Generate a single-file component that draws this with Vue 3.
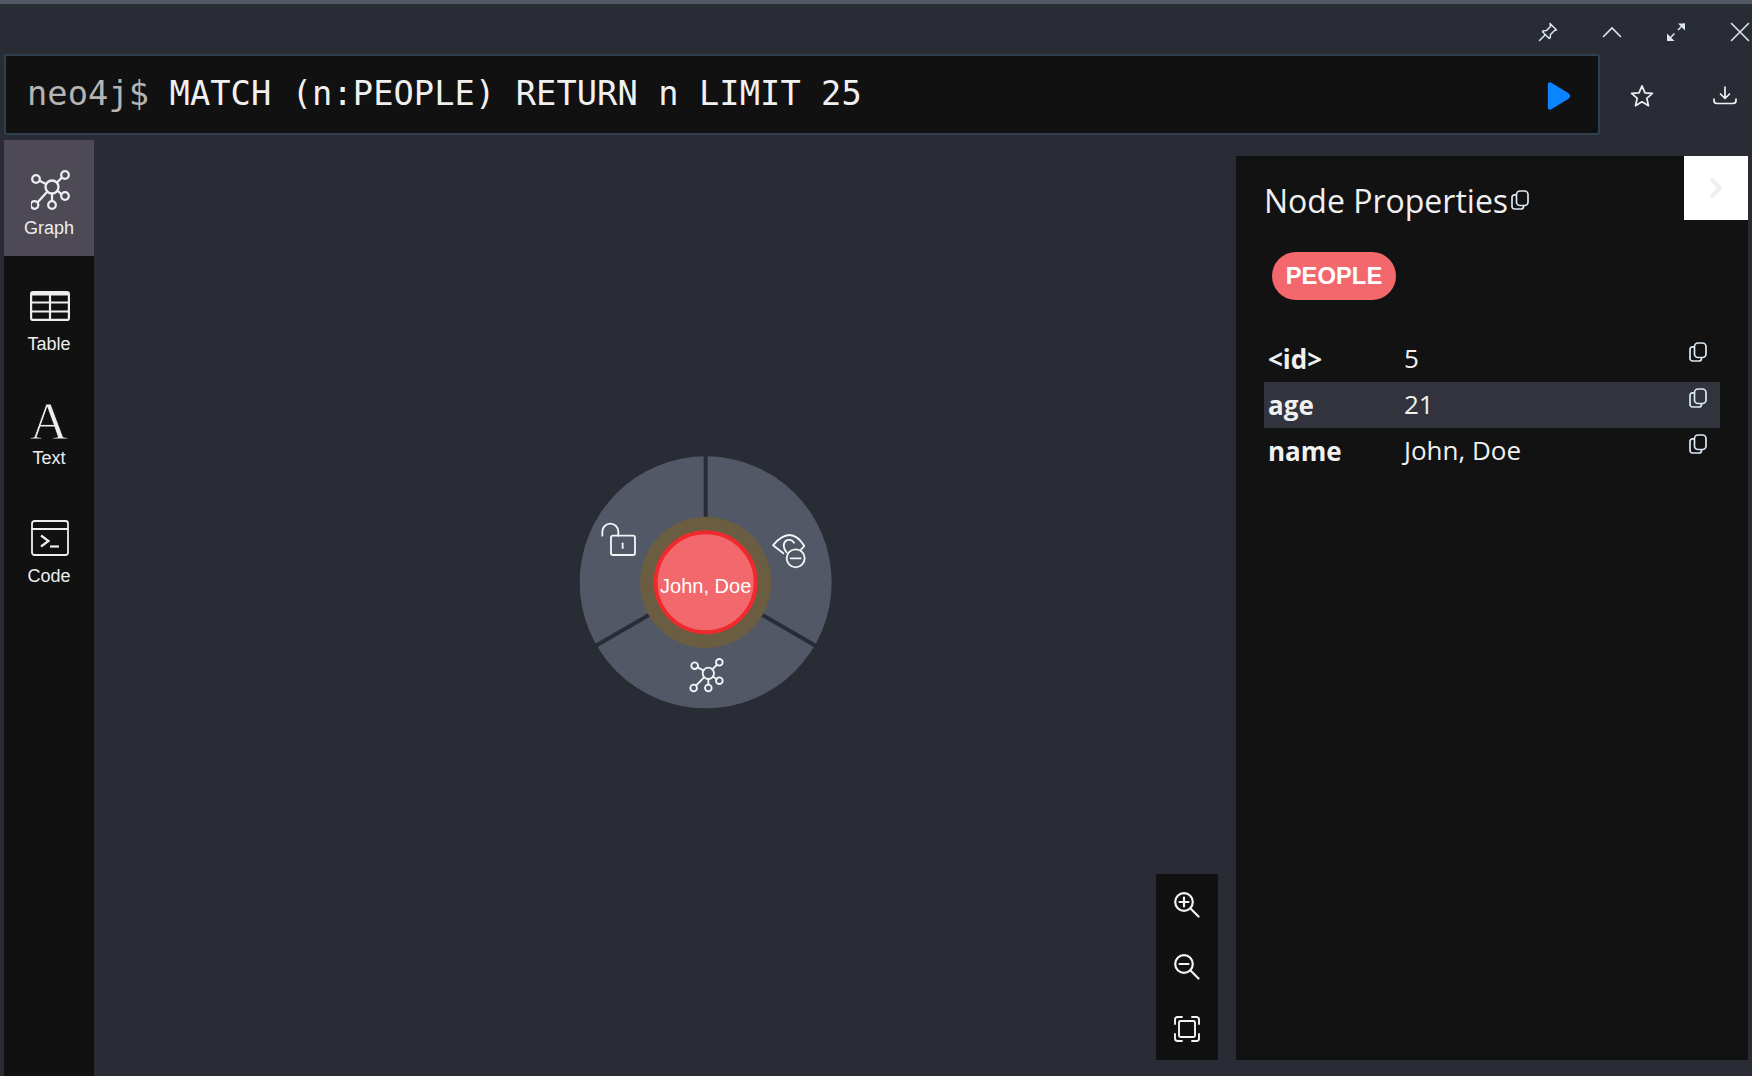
<script setup>
const rows = [
  { key: '<id>', value: '5' },
  { key: 'age', value: '21', alt: true },
  { key: 'name', value: 'John, Doe' }
]
</script>

<template>
  <div class="app">
    <div class="topline"></div>
    <header class="head">
      <button class="hbtn">
        <svg width="20" height="20" viewBox="0 0 20 20" fill="none" stroke="#dce6f0" stroke-width="1.5" stroke-linejoin="round" stroke-linecap="round"><path d="M1.5 18.5 7 13M12 1.5l6.5 6.5-2 .5-4 4 -.3 3.2-1 .8-6.700-6.700.8-1 3.200-.3 4-4z"/></svg>
      </button>
      <button class="hbtn">
        <svg width="20" height="12" viewBox="0 0 20 12" fill="none" stroke="#dce6f0" stroke-width="1.6" stroke-linecap="round"><path d="M1.500 10.500 10 2l8.500 8.500"/></svg>
      </button>
      <button class="hbtn">
        <svg width="20" height="20" viewBox="0 0 20 20" fill="none" stroke="#dce6f0" stroke-width="1.5"><path d="M12 8l6.500-6.500M2 18l6.500-6.500"/><path d="M12 1.500h7v7z" fill="#dce6f0" stroke="none"/><path d="M1 11.500v7.500h7.500z" fill="#dce6f0" stroke="none"/></svg>
      </button>
      <button class="hbtn">
        <svg width="20" height="20" viewBox="0 0 20 20" fill="none" stroke="#dce6f0" stroke-width="1.6" stroke-linecap="round"><path d="M1.500 1.500l17 17M18.500 1.500l-17 17"/></svg>
      </button>
    </header>

    <section class="query">
      <div class="editor">
        <div class="code"><span class="prompt">neo4j$ </span>MATCH (n:PEOPLE) RETURN n LIMIT 25</div>
        <svg class="play" width="24" height="30" viewBox="0 0 24 30"><path d="M4 1.500 L22 12.500 Q24 15 22 17.500 L4 28.500 Q1 29.500 .8 26.500 V3.500 Q1 .5 4 1.500z" fill="#0a84ff"/></svg>
      </div>
      <button class="qbtn star">
        <svg width="24" height="24" viewBox="0 0 24 24" fill="none" stroke="#eef1f5" stroke-width="1.7" stroke-linejoin="round"><path d="M12 1.800l3 7 7.400.6-5.600 4.900 1.700 7.400-6.500-3.900-6.500 3.900 1.700-7.400L1.600 9.400 9 8.800z"/></svg>
      </button>
      <button class="qbtn dl">
        <svg width="24" height="20" viewBox="0 0 24 20" fill="none" stroke="#eef1f5" stroke-width="1.700" stroke-linecap="round" stroke-linejoin="round"><path d="M12 1v11M7.500 8l4.500 4.500L16.500 8M1 13v1.500a3 3 0 0 0 3 3h16a3 3 0 0 0 3-3V13"/></svg>
      </button>
    </section>

    <main class="main">
      <nav class="side">
        <div class="item active">
          <svg class="ico ico-graph" width="42" height="44" viewBox="0 0 42 44" fill="none" stroke="#eceef0" stroke-width="2.300">
            <circle cx="21" cy="20" r="6.500"/><circle cx="5" cy="12" r="3.800"/><circle cx="34" cy="8" r="3.800"/><circle cx="34" cy="29" r="3.800"/><circle cx="21" cy="38" r="3.800"/><circle cx="3.500" cy="38" r="3.800"/>
            <path d="M8.500 13.800 15 17M31 10.500l-5 5M30.500 27.500 27 24M21 34v-7.500M6.500 35.500 16 25"/>
          </svg>
          <span>Graph</span>
        </div>
        <div class="item">
          <svg class="ico ico-table" width="40" height="30" viewBox="0 0 40 30" fill="none" stroke="#eceef0" stroke-width="2.200"><rect x="1.100" y="1.100" width="37.800" height="27.800" rx="2"/><path d="M1 3h38" stroke-width="3"/><path d="M1 11.500h38M1 20.500h38M20 3v26"/></svg>
          <span>Table</span>
        </div>
        <div class="item item-text">
          <div class="glyph">A</div>
          <span>Text</span>
        </div>
        <div class="item">
          <svg class="ico ico-code" width="38" height="36" viewBox="0 0 38 36" fill="none" stroke="#eceef0" stroke-width="1.800"><rect x="1" y="1" width="36" height="34" rx="2.500"/><path d="M1 9h36"/><path d="M10 15.500l7.500 5.500-7.500 5.500" stroke-width="2.200"/><path d="M19 26.500h9" stroke-width="2.200"/></svg>
          <span>Code</span>
        </div>
      </nav>

      <div class="canvas">
        <svg class="node" width="270" height="270" viewBox="0 0 810 810" fill="none">
          <circle cx="407" cy="412" r="378" fill="#525865"/>
          <path d="M407 412V20M407 412 72 605M407 412 742 605" stroke="#292c34" stroke-width="12"/>
          <circle cx="407" cy="412" r="197" fill="#6a5d41"/>
          <circle cx="407" cy="412" r="150" fill="#f2686c" stroke="#ee2a2e" stroke-width="12"/>
          <text x="407" y="443" text-anchor="middle" class="nodelabel">John, Doe</text>
          <g stroke="#f4f5f7" stroke-width="5.500" stroke-linecap="round" stroke-linejoin="round">
            <rect x="123" y="272" width="72" height="58" rx="6"/>
            <path d="M158 295v14"/>
            <path d="M97 272v-12a24 24 0 0 1 48 0v12"/>
            <path d="M640 325 609 301C630 276 648 270 658 270C674 270 690 282 703 303L693 314"/>
            <path d="M672 293C666 284 654 282 647 288C638 296 640 312 650 322"/>
            <circle cx="677" cy="340" r="27"/>
            <path d="M662 340h30"/>
            <circle cx="415" cy="685" r="17"/>
            <circle cx="374" cy="662" r="10"/><circle cx="448" cy="652" r="10"/><circle cx="448" cy="707" r="10"/><circle cx="415" cy="729" r="10"/><circle cx="371" cy="729" r="10"/>
            <path d="M383 667l17 9M440 660l-13 13M440 702l-11-7M415 719v-17M378 722l24-25"/>
          </g>
        </svg>

        <div class="zoom">
          <svg width="26" height="26" viewBox="0 0 26 26" fill="none" stroke="#f2f3f5" stroke-width="2.200" stroke-linecap="round"><circle cx="10" cy="10" r="8.800"/><path d="M16.500 16.500l8 8M10 5.500v9M5.500 10h9"/></svg>
          <svg width="26" height="26" viewBox="0 0 26 26" fill="none" stroke="#f2f3f5" stroke-width="2.200" stroke-linecap="round"><circle cx="10" cy="10" r="8.800"/><path d="M16.500 16.500l8 8M5.500 10h9"/></svg>
          <svg width="26" height="26" viewBox="0 0 26 26" fill="none" stroke="#f2f3f5" stroke-width="1.900" stroke-linecap="round"><rect x="5" y="5" width="16" height="16" rx="1.500"/><path d="M1 8V3.500A2.500 2.500 0 0 1 3.500 1H8M18 1h4.500A2.500 2.500 0 0 1 25 3.500V8M25 18v4.500a2.500 2.500 0 0 1-2.500 2.500H18M8 25H3.500A2.500 2.500 0 0 1 1 22.500V18"/></svg>
        </div>
      </div>

      <aside class="panel">
        <button class="collapse">
          <svg width="14" height="22" viewBox="0 0 14 22" fill="none" stroke="#efefef" stroke-width="4"><path d="M2 2l9 9-9 9"/></svg>
        </button>
        <h2 class="title">Node Properties<svg class="copy" width="18" height="20" viewBox="0 0 18 20" fill="none" stroke="#dce8f4" stroke-width="1.700"><rect x="5.500" y="1" width="11.500" height="14.500" rx="3.500"/><path d="M5 4.800H3.500A2.500 2.500 0 0 0 1 7.300v9.200A2.500 2.500 0 0 0 3.500 19h6.500a2.500 2.500 0 0 0 2.500-2.500v-1"/></svg></h2>
        <div class="badge">PEOPLE</div>
        <div class="props">
          <div v-for="r in rows" :key="r.key" class="row" :class="{ alt: r.alt }">
            <span class="k">{{ r.key }}</span>
            <span class="v">{{ r.value }}</span>
            <svg class="rcopy" width="18" height="20" viewBox="0 0 18 20" fill="none" stroke="#dce8f4" stroke-width="1.700"><rect x="5.500" y="1" width="11.500" height="14.500" rx="3.500"/><path d="M5 4.800H3.500A2.500 2.500 0 0 0 1 7.300v9.200A2.500 2.500 0 0 0 3.500 19h6.500a2.500 2.500 0 0 0 2.500-2.500v-1"/></svg>
          </div>
        </div>
      </aside>
    </main>
  </div>
</template>

<style scoped>
.app {
  width: 1752px;
  height: 1076px;
  background: #292c34;
  overflow: hidden;
  display: flex;
  flex-direction: column;
  font-family: "Liberation Sans", Arial, sans-serif;
}
button { background: none; border: 0; padding: 0; display: flex; align-items: center; justify-content: center; }
.topline { height: 4px; background: #525865; flex: none; }
.head { height: 50px; flex: none; display: flex; justify-content: flex-end; margin-right: -20px; }
.hbtn { width: 64px; height: 56px; flex: none; }
.query { height: 81px; flex: none; display: flex; padding-left: 4px; }
.editor {
  width: 1596px;
  height: 81px;
  flex: none;
  box-sizing: border-box;
  background: #111;
  border: 2px solid #2f4050;
  border-radius: 3px;
  display: flex;
  align-items: center;
  justify-content: space-between;
  padding: 0 26px 0 21px;
}
.code {
  font-family: "DejaVu Sans Mono", monospace;
  font-size: 33.700px;
  letter-spacing: 0.080px;
  color: #f0f0f0;
  white-space: pre;
  margin-top: -2px;
}
.prompt { color: #b4b4b4; }
.play { margin: 2px 1px 0 0; }
.qbtn { width: 82px; height: 81px; flex: none; }
.qbtn svg { margin-top: 2px; }
.star svg { margin-left: 2px; }
.dl svg { margin-left: 4px; }
.main { flex: 1; display: flex; min-height: 0; }
.side {
  margin: 5px 0 0 4px;
  width: 90px;
  flex: none;
  background: #111;
  display: flex;
  flex-direction: column;
  color: #eceef0;
  font-size: 18px;
}
.item {
  height: 116px;
  flex: none;
  display: flex;
  flex-direction: column;
  align-items: center;
  justify-content: flex-end;
  padding-bottom: 17px;
  box-sizing: border-box;
  gap: 6px;
}
.item.active { background: #4d4a55; }
.ico { display: block; }
.ico-graph { margin: 0 0 1px 6px; }
.ico-table { margin: 0 0 7px 2px; }
.ico-code { margin: 0 0 4px 2px; }
.item-text { padding-bottom: 19px; }
.glyph {
  font-family: "Liberation Serif", serif;
  font-size: 53px;
  line-height: 42px;
  height: 42px;
  -webkit-text-stroke: 0.8px #111;
}
.canvas { flex: 1; position: relative; min-width: 0; }
.node { position: absolute; left: 476px; top: 310px; }
.nodelabel { font-family: "Liberation Sans", Arial, sans-serif; font-size: 60px; fill: #fff; }
.zoom {
  position: absolute;
  right: 18px;
  bottom: 16px;
  width: 62px;
  height: 186px;
  background: #111;
  display: flex;
  flex-direction: column;
  align-items: center;
  justify-content: space-around;
}
.panel {
  position: relative;
  width: 512px;
  flex: none;
  margin: 21px 4px 16px 0;
  background: #121212;
  color: #f0f0f0;
  font-family: "Open Sans", sans-serif;
}
.collapse {
  position: absolute;
  right: 0;
  top: 0;
  width: 64px;
  height: 64px;
  background: #fff;
}
.title {
  margin: 0;
  padding: 23px 0 0 28px;
  font-size: 32px;
  font-weight: 400;
  line-height: 44px;
  display: flex;
  align-items: center;
}
.copy { margin: -2px 0 0 3px; }
.badge {
  margin: 29px 0 0 36px;
  width: 124px;
  height: 48px;
  border-radius: 24px;
  background: #f2686c;
  color: #fff;
  font-family: "Liberation Sans", Arial, sans-serif;
  font-weight: 700;
  font-size: 23.800px;
  display: flex;
  align-items: center;
  justify-content: center;
}
.props { margin: 36px 0 0 28px; width: 456px; }
.row {
  height: 46px;
  position: relative;
  display: flex;
  align-items: center;
  font-size: 26px;
  line-height: 46px;
}
.row.alt { background: #31343d; }
.k { width: 140px; box-sizing: border-box; padding-left: 4px; font-weight: 700; flex: none; margin-top: -1px; }
.v { font-weight: 400; margin-top: -2px; }
.rcopy { position: absolute; right: 13px; top: 6px; }
</style>
